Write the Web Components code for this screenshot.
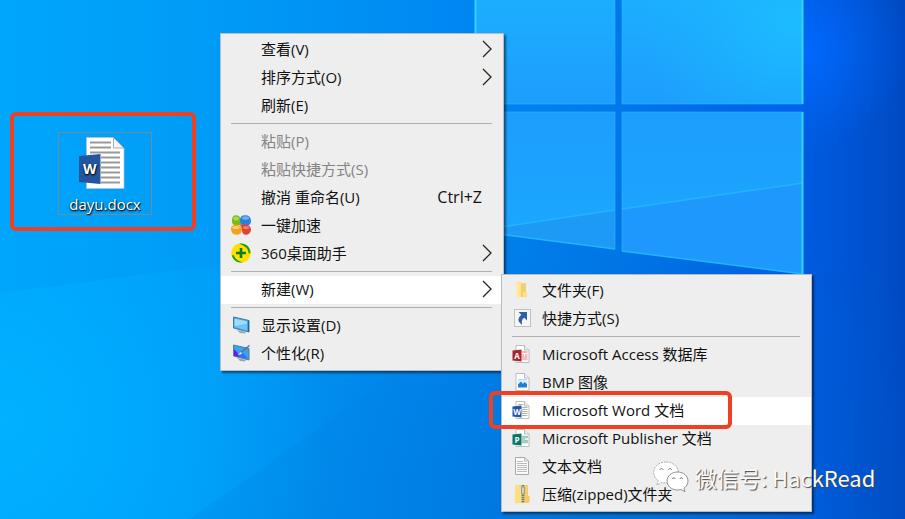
<!DOCTYPE html>
<html lang="zh-CN">
<head>
<meta charset="utf-8">
<title>Desktop</title>
<style>
html, body { height: 100%; margin: 0; }
body {
  font-family: "Open Sans", "Noto Sans", "Noto Sans CJK SC", sans-serif;
  font-size: 15px;
  line-height: 20px;
  color: #111;
  overflow: hidden;
}
</style>
</head>
<body>
<win-desktop></win-desktop>

<template id="t-wallpaper">
<style>
:host { display: block; }
svg { display: block; width: 100%; height: 100%; }
</style>
<svg viewBox="0 0 905 519" preserveAspectRatio="none" aria-hidden="true">
  <defs>
    <linearGradient id="base" x1="0" y1="0" x2="905" y2="0" gradientUnits="userSpaceOnUse">
      <stop offset="0" stop-color="#00a6fc"/><stop offset=".24" stop-color="#009bf6"/>
      <stop offset=".5" stop-color="#0088f2"/><stop offset=".7" stop-color="#0076ea"/>
      <stop offset=".88" stop-color="#005de2"/><stop offset="1" stop-color="#004ac4"/>
    </linearGradient>
    <radialGradient id="low" cx="580" cy="540" r="400" gradientUnits="userSpaceOnUse">
      <stop offset="0" stop-color="#0068c8" stop-opacity=".5"/><stop offset="1" stop-color="#0068c4" stop-opacity="0"/>
    </radialGradient>
    <radialGradient id="glow" cx="800" cy="50" r="105" gradientUnits="userSpaceOnUse">
      <stop offset="0" stop-color="#006aff"/><stop offset="1" stop-color="#0064f4" stop-opacity="0"/>
    </radialGradient>
    <radialGradient id="left" cx="0" cy="420" r="330" gradientUnits="userSpaceOnUse">
      <stop offset="0" stop-color="#00b2ff"/><stop offset="1" stop-color="#00a8ff" stop-opacity="0"/>
    </radialGradient>
    <linearGradient id="pane" x1="0" y1="0" x2="0" y2="1">
      <stop offset="0" stop-color="#1caeff"/><stop offset="1" stop-color="#1d9efd"/>
    </linearGradient>
    <linearGradient id="pane2" x1="0" y1="0" x2="0" y2="1">
      <stop offset="0" stop-color="#1d9efd"/><stop offset="1" stop-color="#1aa8ff"/>
    </linearGradient>
    <radialGradient id="shine" cx="790" cy="20" r="150" gradientUnits="userSpaceOnUse">
      <stop offset="0" stop-color="#1cbcff"/><stop offset="1" stop-color="#1cb2ff" stop-opacity="0"/>
    </radialGradient>
    <linearGradient id="rayfade" x1="200" y1="519" x2="520" y2="400" gradientUnits="userSpaceOnUse">
      <stop offset="0" stop-color="#0070d0" stop-opacity=".16"/><stop offset="1" stop-color="#0070d0" stop-opacity="0"/>
    </linearGradient>
  </defs>
  <rect width="905" height="519" fill="url(#base)"/>
  <rect x="690" width="215" height="300" fill="url(#glow)"/>
  <rect y="130" width="905" height="389" fill="url(#low)"/>
  <path d="M0 293L240 262L520 300V519H0Z" fill="url(#left)"/>
  <path d="M190 519L400 371H520V519Z" fill="url(#rayfade)"/>
  <path d="M475 0H615V104H475Z" fill="url(#pane)"/>
  <path d="M622 0H803V104H622Z" fill="url(#pane)"/>
  <path d="M622 0H803V104H622Z" fill="url(#shine)"/>
  <path d="M475 112H615V249L475 231Z" fill="url(#pane2)"/>
  <path d="M622 112H803V274L622 251Z" fill="url(#pane2)"/>
  <path d="M475 231L615 210V249Z" fill="#1c9af5"/>
  <path d="M622 209L803 183V274L622 251Z" fill="#1e98fc"/>
  <path d="M475 231L615 210M622 209L803 183M475 231L615 249M622 251L803 274" stroke="#20b6ff" stroke-width="1.5" fill="none"/>
  <path d="M475 104H615V0M475 112H615V249M622 0V104H803M622 251V112H803" stroke="#2ab8ff" stroke-opacity=".6" fill="none"/>
  <path d="M475.500 0V104M802.500 0V104M802.500 112V275" stroke="#30d4ff" stroke-width="2" fill="none"/>
</svg>
</template>

<template id="t-frame">
<style>
:host { display: block; box-sizing: border-box; border: 4px solid #ee4023; border-radius: 6px; }
</style>
<slot></slot>
</template>

<template id="t-shortcut">
<style>
:host { display: block; }
button {
  display: flex; flex-direction: column; align-items: center; gap: 5px;
  width: 94px; padding: 4px 0 0; border: 1px solid #6f8d9f;
  background: none; font: inherit; color: #fff;
  text-shadow: 0 1px 2px #000, 1px 1px 1px #123;
}
::slotted(win-icon) { margin-right: 6px; }
</style>
<button type="button"><slot name="icon"></slot><span><slot></slot></span></button>
</template>

<template id="t-menu">
<style>
:host {
  display: flex; flex-direction: column; box-sizing: border-box;
  padding: 2px 0; background: #eee; border: 1px solid #b8bcc0;
  box-shadow: 2px 2px 2px rgba(0,0,0,.5);
}
</style>
<slot></slot>
</template>

<template id="t-item">
<style>
:host { display: block; }
button {
  display: flex; align-items: center; gap: 10px; width: 100%;
  padding: 3px 11px 5px 10px; border: 0; background: none;
  font: inherit; color: inherit; text-align: left; white-space: nowrap;
}
button:disabled { color: #838383; }
:host([active]) button { background: #fff; }
.icon { width: 20px; height: 20px; flex: none; }
.label { flex: 1; }
.end { display: flex; align-items: center; font-size: 16px; }
.arrow { width: 10px; height: 18px; fill: none; }
:host([submenu]) .arrow { stroke: #26261a; stroke-width: 1.3; }
</style>
<button type="button" role="menuitem">
  <span class="icon"><slot name="icon"></slot></span>
  <span class="label"><slot></slot></span>
  <span class="end"><slot name="key"></slot><svg class="arrow" viewBox="0 0 10 18" aria-hidden="true"><path d="M1 1L9 9L1 17"/></svg></span>
</button>
</template>

<template id="t-sep">
<style>
:host { display: block; padding: 3px 11px 4px 10px; }
hr { margin: 0; border: 0; border-top: 1px solid #b0b0b0; }
</style>
<hr>
</template>

<template id="t-mark">
<style>
:host {
  display: flex; align-items: center; gap: 6px; white-space: nowrap;
  font: 22px/32px "Noto Sans CJK SC", sans-serif; color: #fafafa;
  text-shadow: 1px 1px 1px #444;
}
svg { width: 36px; height: 32px; flex: none; }
</style>
<svg viewBox="0 0 36 32" aria-hidden="true">
  <path d="M13 1C6 1 .7 5.500 .7 11.500c0 3.500 1.800 6.300 4.500 8.200L4 24l5-2.600c1.300.4 2.700.6 4 .6 7 0 12.300-4.700 12.300-10.500S20 1 13 1Z" fill="#fff" stroke="#999" stroke-width=".8" stroke-dasharray="2 1"/>
  <path d="M24.500 11c-6 0-10.500 4-10.500 9s4.500 9 10.500 9c1.200 0 2.400-.2 3.500-.5l4 2.200-1-3.500c2.500-1.700 4-4.300 4-7.200 0-5-4.500-9-10.500-9Z" fill="#fff" stroke="#777" stroke-width=".8"/>
  <path d="M7 9c0-2 3-2 3 0M15.500 9c0-2 3-2 3 0M19.500 18c0-1.800 2.600-1.800 2.600 0M27 18c0-1.800 2.600-1.800 2.600 0" fill="none" stroke="#777" stroke-width="1"/>
</svg>
<span><slot></slot></span>
</template>

<template id="t-icon"><style>:host { display: block; width: 20px; height: 20px; } :host([name="docx"]) { width: 46px; height: 52px; } svg { display: block; width: 100%; height: 100%; } text { font-family: "Open Sans", sans-serif; font-weight: 700; fill: #fff; }</style></template>

<template id="t-desktop">
<style>
:host { display: block; position: relative; height: 100%; min-height: 100vh; overflow: hidden; }
win-wallpaper { position: absolute; inset: 0; }
.file { position: absolute; left: 10px; top: 112px; padding: 16px 40px 12px 44px; }
.main { position: absolute; left: 220px; top: 33px; min-width: 284px; }
.new { position: absolute; left: 501px; top: 274px; min-width: 311px; }
.pick { position: absolute; left: 489px; top: 391px; width: 243px; height: 38px; pointer-events: none; }
mark-label { position: absolute; left: 653px; top: 461px; }
</style>
<win-wallpaper></win-wallpaper>
<red-frame class="file">
  <desk-shortcut><win-icon slot="icon" name="docx"></win-icon>dayu.docx</desk-shortcut>
</red-frame>
<win-menu class="main">
  <win-item submenu>查看(V)</win-item>
  <win-item submenu>排序方式(O)</win-item>
  <win-item>刷新(E)</win-item>
  <win-sep></win-sep>
  <win-item disabled>粘贴(P)</win-item>
  <win-item disabled>粘贴快捷方式(S)</win-item>
  <win-item>撤消 重命名(U)<span slot="key">Ctrl+Z</span></win-item>
  <win-item><win-icon slot="icon" name="boost"></win-icon>一键加速</win-item>
  <win-item submenu><win-icon slot="icon" name="helper"></win-icon>360桌面助手</win-item>
  <win-sep></win-sep>
  <win-item submenu active>新建(W)</win-item>
  <win-sep></win-sep>
  <win-item><win-icon slot="icon" name="display"></win-icon>显示设置(D)</win-item>
  <win-item><win-icon slot="icon" name="personal"></win-icon>个性化(R)</win-item>
</win-menu>
<win-menu class="new">
  <win-item><win-icon slot="icon" name="folder"></win-icon>文件夹(F)</win-item>
  <win-item><win-icon slot="icon" name="link"></win-icon>快捷方式(S)</win-item>
  <win-sep></win-sep>
  <win-item><win-icon slot="icon" name="access"></win-icon>Microsoft Access 数据库</win-item>
  <win-item><win-icon slot="icon" name="bmp"></win-icon>BMP 图像</win-item>
  <win-item active><win-icon slot="icon" name="word"></win-icon>Microsoft Word 文档</win-item>
  <win-item><win-icon slot="icon" name="publisher"></win-icon>Microsoft Publisher 文档</win-item>
  <win-item><win-icon slot="icon" name="text"></win-icon>文本文档</win-item>
  <win-item><win-icon slot="icon" name="zip"></win-icon>压缩(zipped)文件夹</win-item>
</win-menu>
<red-frame class="pick"></red-frame>
<mark-label>微信号: HackRead</mark-label>
</template>

<script>
const page = '<path d="M4 1.500H12.500L17 6V18.500H4Z" fill="#fff" stroke="#b4b4b4" stroke-width=".9"/><path d="M12.500 1.500V6H17" fill="#eee" stroke="#b4b4b4" stroke-width=".9"/>';
const office = (color, letter, extra) => page + extra +
  `<path d="M.5 6.500L9.500 5.500V17.500L.5 16.500Z" fill="${color}"/><text x="5" y="14.500" font-size="8" text-anchor="middle">${letter}</text>`;
const icons = {
  docx: ['0 0 46 52', `<path d="M7.500 .5H34.500L45 11V51.500H7.500Z" fill="#fff" stroke="#b5c2cc" stroke-width=".7"/>
    <path d="M34.500 .5V11H45Z" fill="#f4f4f4" stroke="#8e9aa3" stroke-width=".8"/>
    <path d="M11 5.500H32M11 10.500H32M11 15.500H41M22 20.500H41M22 25.500H41M22 30.500H41M22 35.500H41M22 40.500H41M22 45.500H41" stroke="#999" stroke-width="1.800"/>
    <path d="M0 19L21.500 17V47L0 45Z" fill="#2456a0"/><text x="10.800" y="37" font-size="14" text-anchor="middle">W</text>`],
  boost: ['0 0 20 20', `<path d="M1 5Q1 .3 5 .3Q9 .3 10 5V10H4Q1 10 1 6Z" fill="#79b81e"/><path d="M9 5Q9 .3 14 .3Q20 .3 20 6Q20 10 16 10.500H12Q9 9 9 5Z" fill="#2c80e0"/>
    <path d="M0 13Q1 9.500 6 9.500Q11 11 11 15Q10.500 19.700 5.500 19.700Q0 19.500 0 14Z" fill="#f3a322"/><path d="M10 9.500H16Q20 11 20 15Q19 19.700 15 19.700Q11 19.700 11 15Q11 12 9 10Z" fill="#e04434"/>
    <ellipse cx="5" cy="3.500" rx="2.800" ry="2" fill="#a9d854"/><ellipse cx="14.500" cy="3" rx="3.500" ry="1.700" fill="#70b0f6"/><ellipse cx="5" cy="12.500" rx="3.500" ry="1.500" fill="#ffd36a"/><ellipse cx="15" cy="12.500" rx="3" ry="1.500" fill="#f07d6e"/>`],
  helper: ['0 0 20 20', `<circle cx="10" cy="10" r="9.800" fill="#ffe000"/>
    <path d="M8 .6A9.600 9.600 0 0 1 19.500 10L17.800 10.500Q17.500 4 8 .6ZM12 19.400A9.600 9.600 0 0 1 .8 12.500L2.500 12Q4.500 17.500 12 19.400Z" fill="#159a20"/>
    <path d="M10 5V15M5 10H15" stroke="#0b7d1b" stroke-width="2.600"/>`],
  display: ['0 0 20 20', `<path d="M6 15L15 17L14 18.500L9 18Z" fill="#9aa6ae"/><path d="M2.500 2L18 5.500V17L2.500 13Z" fill="#3ea6ea" stroke="#47799c"/>
    <path d="M3.500 3.500L16 6.200V9L3.500 11.500Z" fill="#9edcff"/><path d="M3.500 12L16 9V15.500Z" fill="#6fc4fa"/><path d="M17.500 5.500V17" stroke="#27668f"/>`],
  personal: ['0 0 20 20', `<path d="M6 15L15 17L14 18.500L9 18Z" fill="#9aa6ae"/><path d="M2.500 2L18 5.500V17L2.500 13Z" fill="#35a4f4" stroke="#5b7c96"/>
    <path d="M3 6L7.500 11L8.500 14L3 12.700Z" fill="#6a1be0"/><path d="M7 11L12 10L17 16L8 14Z" fill="#3a6cf0"/>
    <path d="M18.500 2.500L10 9.500" stroke="#607080" stroke-width="1.500"/><path d="M10 9L6.500 12L11 11Z" fill="#dfe9f4"/>`],
  folder: ['0 0 20 20', `<path d="M4 2H9.500V17L4 16Z" fill="#ffe08a"/><path d="M9 3.500L14 3V17H9Z" fill="#f3cf70"/><path d="M4 2.500L7.500 4V18.500L4 16.500Z" fill="#ffe9a6"/><path d="M11 12H15V17H11Z" fill="#ffdf85"/>`],
  link: ['0 0 20 20', `<rect x="2.500" y="1.500" width="16" height="17" fill="#f6f6f6" stroke="#bcc2c8"/>
    <path d="M6.500 4H15V12.500L12.200 9.800Q9 11.500 10 17Q3 12 9.300 6.800Z" fill="#2c62a4"/>`],
  access: ['0 0 20 20', office('#a4262e', 'A', '<path d="M9.500 7H15.500V16H9.500Z" fill="#f6b9bd"/><path d="M9.500 9.500H15.500M12.500 9.500V12.500" stroke="#fff"/>')],
  bmp: ['0 0 20 20', page + '<path d="M6 7.500H15V15.500H6Z" fill="#1b7fdb"/><path d="M6 7.500H15V12L12.500 10L11 12L9 9.500L6 12.500Z" fill="#d8efff"/>'],
  word: ['0 0 20 20', office('#2456a0', 'W', '<path d="M6 4.500H11.500M10 7.500H15.500M10 9.500H15.500M10 11.500H15.500M10 13.500H15.500M10 15.500H15.500" stroke="#aaa" stroke-width=".9"/>')],
  publisher: ['0 0 20 20', office('#087568', 'P', '<path d="M10.500 8H12.500V15H10.500ZM13.500 8H15.500V10H13.500ZM13.500 12H15.500V15H13.500Z" fill="#a9d6d0" stroke="#79aaa4" stroke-width=".5"/>')],
  text: ['0 0 20 20', '<path d="M3.500 1.500H12.500L16.500 5V18.500H3.500Z" fill="#fafafa" stroke="#a9a9a9"/><path d="M12.500 1.500V5H16.500M5 5.500H11M5 7.500H15M5 9.500H15M5 11.500H15M5 13.500H15M5 15.500H15" fill="none" stroke="#b4b4b4" stroke-width=".9"/>'],
  zip: ['0 0 20 20', `<path d="M3 1.500L16 1V19H3Z" fill="#f3d066"/><path d="M3 1.500L9 2.500V19.500L3 18.500Z" fill="#fbdf83"/><path d="M14 12H17.500V18.500H14Z" fill="#f5c95a"/>
    <path d="M11 1V19" stroke="#c9b884" stroke-width="3"/><path d="M11 1V19" stroke="#777" stroke-width="2.500" stroke-dasharray="1 1"/><path d="M9.700 3H12.300V10H9.700Z" fill="#ddd" stroke="#888" stroke-width=".8"/>`]
};

function define(name, templateId, setup) {
  customElements.define(name, class extends HTMLElement {
    constructor() {
      super();
      this.attachShadow({ mode: 'open' })
        .append(document.getElementById(templateId).content.cloneNode(true));
    }
    connectedCallback() { if (setup) setup(this, this.shadowRoot); }
  });
}

define('win-wallpaper', 't-wallpaper');
define('red-frame', 't-frame');
define('desk-shortcut', 't-shortcut');
define('win-icon', 't-icon', (el, root) => {
  if (root.querySelector('svg')) return;
  const [box, body] = icons[el.getAttribute('name')];
  const holder = document.createElement('template');
  holder.innerHTML = `<svg viewBox="${box}" aria-hidden="true">${body}</svg>`;
  root.append(holder.content);
});
define('win-menu', 't-menu', el => el.setAttribute('role', 'menu'));
define('win-item', 't-item', (el, root) => {
  const button = root.querySelector('button');
  button.disabled = el.hasAttribute('disabled');
  if (el.hasAttribute('submenu')) button.setAttribute('aria-haspopup', 'menu');
});
define('win-sep', 't-sep');
define('mark-label', 't-mark');
define('win-desktop', 't-desktop');
</script>
</body>
</html>
